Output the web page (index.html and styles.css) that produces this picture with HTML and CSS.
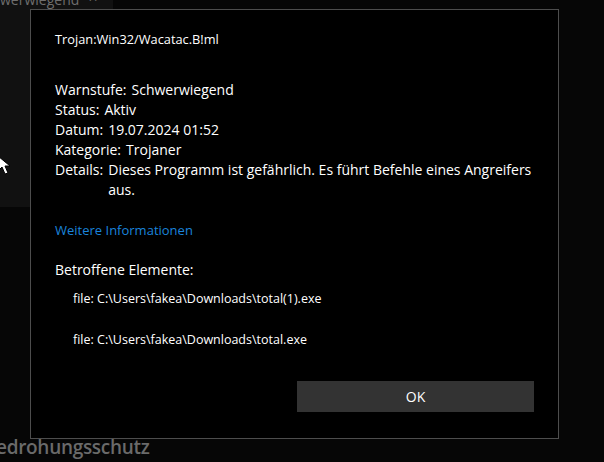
FILE: index.html
```html
<!DOCTYPE html>
<html lang="de">
<head>
<meta charset="utf-8">
<link rel="stylesheet" href="styles.css">
</head>
<body>
<div class="desktop">
  <div class="bg-panel">
    <div class="bg-top">werwiegend <span class="caret">^</span></div>
  </div>
  <div class="bg-title">edrohungsschutz</div>
  <svg class="cursor" width="14" height="20" viewBox="0 0 14 20"><path d="M-2 1 L-2 16 L2 12 L5 19 L8 18 L5 11 L10 11 Z" fill="#fff" stroke="#000" stroke-width="1"/></svg>

  <div class="dialog">
    <div class="title">Trojan:Win32/Wacatac.B!ml</div>
    <div class="details">
      <div class="row"><span class="label">Warnstufe:</span><span class="value">Schwerwiegend</span></div>
      <div class="row"><span class="label">Status:</span><span class="value">Aktiv</span></div>
      <div class="row"><span class="label">Datum:</span><span class="value">19.07.2024 01:52</span></div>
      <div class="row"><span class="label">Kategorie:</span><span class="value">Trojaner</span></div>
      <div class="row"><span class="label">Details:</span><span class="value">Dieses Programm ist gefährlich. Es führt Befehle eines Angreifers aus.</span></div>
    </div>
    <a class="link">Weitere Informationen</a>
    <div class="affected">Betroffene Elemente:</div>
    <ul class="files">
      <li>file: C:\Users\fakea\Downloads\total(1).exe</li>
      <li>file: C:\Users\fakea\Downloads\total.exe</li>
    </ul>
    <div class="actions"><button class="ok">OK</button></div>
  </div>
</div>
</body>
</html>
```

FILE: styles.css
```css
html, body {
  margin: 0;
  padding: 0;
  background: #060606;
}
body {
  width: 604px;
  height: 462px;
  overflow: hidden;
  font-family: "Open Sans", "Noto Sans", sans-serif;
  color: #fff;
}
.desktop {
  position: relative;
  width: 604px;
  height: 462px;
}
.bg-panel {
  position: absolute;
  left: 0;
  top: 0;
  width: 113px;
  height: 207px;
  background: #111;
}
.bg-top {
  position: absolute;
  left: 0;
  top: -10px;
  font-size: 14px;
  color: #6e6e6e;
  white-space: nowrap;
}
.caret { margin-left: 6px; }
.bg-title {
  position: absolute;
  left: -4px;
  top: 434px;
  font-size: 19px;
  font-weight: 600;
  color: #6a6a6a;
  letter-spacing: -0.3px;
}
.cursor {
  position: absolute;
  left: 0;
  top: 155px;
}
.dialog {
  position: absolute;
  left: 30px;
  top: 9px;
  width: 527px;
  height: 428px;
  background: #000;
  border: 1px solid #4d4d4d;
  box-sizing: content-box;
  padding: 0;
}
.title {
  margin: 20px 0 0 24px;
  font-size: 12.8px;
  line-height: 18px;
}
.details {
  margin: 32px 0 0 24px;
  width: 485px;
  font-size: 14px;
  line-height: 20px;
}
.row {
  display: flex;
}
.label {
  margin-right: 5px;
  flex: none;
}
.value { flex: 1; }
.link {
  display: block;
  margin: 21px 0 0 24px;
  font-size: 13px;
  line-height: 18px;
  color: #1a84dc;
}
.affected {
  margin: 21px 0 0 24px;
  font-size: 14px;
  line-height: 20px;
}
.files {
  list-style: none;
  margin: 10px 0 0 42px;
  padding: 0;
  font-size: 12.5px;
  line-height: 18px;
  display: flex;
  flex-direction: column;
  gap: 23px;
}
.actions {
  display: flex;
  justify-content: flex-end;
  margin: 32px 24px 0 0;
}
.ok {
  width: 237px;
  height: 31px;
  background: #333;
  border: none;
  color: #fff;
  font-family: inherit;
  font-size: 14px;
  padding: 0;
}
```
